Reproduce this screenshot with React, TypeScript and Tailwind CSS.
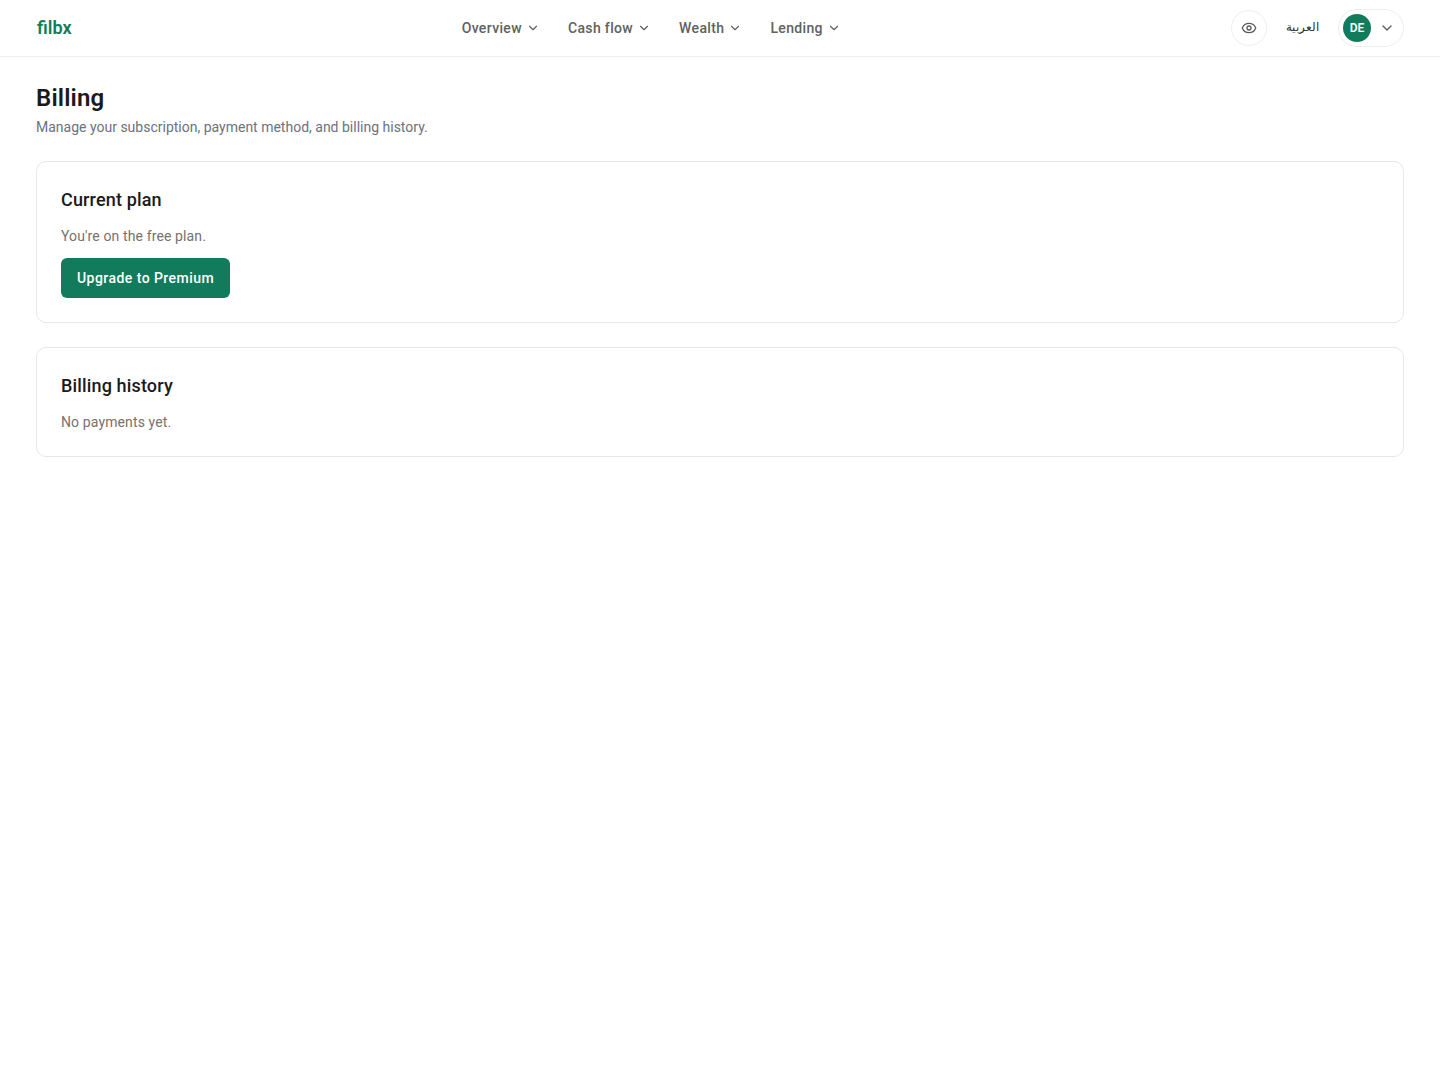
import React from 'react';
import { ChevronDown, Eye } from 'lucide-react';

const navItems = ['Overview', 'Cash flow', 'Wealth', 'Lending'];

const Card: React.FC<{ title: string; children: React.ReactNode }> = ({ title, children }) => (
  <section className="rounded-[10px] border border-[#e7e7e7] bg-white p-6">
    <h2 className="text-[18px] leading-[28px] font-medium tracking-[0.15px] text-[#1a1a1a]">{title}</h2>
    {children}
  </section>
);

export default function App() {
  return (
    <div className="min-h-[1080px] bg-white font-['Roboto','Noto_Sans',sans-serif]">
      <header className="flex h-[57px] items-center justify-between border-b border-[#eeeeee] px-9">
        <a className="pb-[2px] pl-px text-[18px] font-semibold text-[#127b5b]">filbx</a>
        <nav className="flex items-center gap-7">
          {navItems.map((item) => (
            <button key={item} className="flex items-center gap-1 text-sm font-medium tracking-[0.35px] text-[#616161]">
              {item}
              <ChevronDown size={14} />
            </button>
          ))}
        </nav>
        <div className="flex w-[173px] items-center justify-between">
          <button className="flex h-9 w-9 items-center justify-center rounded-full border border-[#eeeeee] text-[#5c5c5c]">
            <Eye size={16} />
          </button>
          <span className="font-['Liberation_Sans',sans-serif] text-[11.5px] text-[#333333]">العربية</span>
          <button className="flex h-[38px] w-[66px] items-center gap-2 rounded-full border border-[#eeeeee] pl-1">
            <span className="flex h-7 w-7 items-center justify-center rounded-full bg-[#127b5b] text-xs font-semibold text-white">DE</span>
            <ChevronDown size={16} className="text-[#5c5c5c]" />
          </button>
        </div>
      </header>
      <main className="flex flex-col gap-6 px-9 pt-[25px]">
        <div>
          <h1 className="text-2xl leading-8 font-semibold tracking-[0.15px] text-[#1a1a1a]">Billing</h1>
          <p className="mt-[3px] text-sm leading-5 text-[#6b7280]">Manage your subscription, payment method, and billing history.</p>
        </div>
        <Card title="Current plan">
          <p className="mt-3 text-sm leading-5 tracking-[0.12px] text-[#78716c]">You're on the free plan.</p>
          <button className="mt-3 h-10 rounded-md bg-[#127b5b] px-4 text-sm font-medium tracking-[0.45px] text-white">Upgrade to Premium</button>
        </Card>
        <Card title="Billing history">
          <p className="mt-3 text-sm leading-5 tracking-[0.12px] text-[#78716c]">No payments yet.</p>
        </Card>
      </main>
    </div>
  );
}
